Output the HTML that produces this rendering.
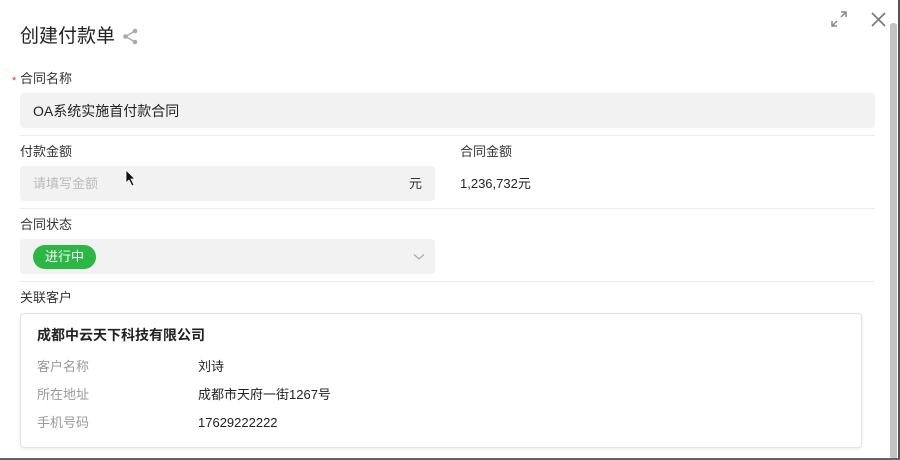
<!DOCTYPE html>
<html><head><meta charset="utf-8"><style>
*{margin:0;padding:0;box-sizing:border-box}
body{width:900px;height:460px;background:#fff;position:relative;overflow:hidden;font-family:"Liberation Sans","Noto Sans CJK SC",sans-serif;color:#222;font-size:13px;line-height:16px}
.a{position:absolute;line-height:16px}
.lbl{font-size:13px;color:#333}
.box{background:#f2f2f2;border-radius:4px}
.hr{height:1px;background:#ececec}
</style></head><body>
<div class="a" style="left:20px;top:24px;font-size:19px;line-height:26px;color:#222">创建付款单</div>
<svg class="a" style="left:122px;top:28px" width="17" height="17" viewBox="0 0 17 17"><g fill="#aaa"><circle cx="13" cy="3" r="2.3"/><circle cx="3.5" cy="8.5" r="2.3"/><circle cx="13" cy="14" r="2.3"/></g><path d="M13 3L3.5 8.5L13 14" stroke="#aaa" stroke-width="1.4" fill="none"/></svg>
<svg class="a" style="left:830px;top:10px" width="18" height="18" viewBox="0 0 18 18"><path d="M11 2h5v5M16 2l-5 5M2 11v5h5M2 16l5-5" stroke="#888" stroke-width="1.5" fill="none"/></svg>
<svg class="a" style="left:871px;top:12px" width="15" height="15" viewBox="0 0 15 15"><path d="M1 1L14 14M14 1L1 14" stroke="#777" stroke-width="1.6"/></svg>
<div class="a" style="left:890px;top:23px;width:7px;height:437px;background:#c4c4c4;border-radius:3px"></div>
<div class="a" style="left:898px;top:0;width:2px;height:460px;background:#555"></div>
<div class="a" style="left:0;top:458px;width:900px;height:2px;background:#666"></div>

<div class="a" style="left:12px;top:73px;color:#e33;font-size:11px">*</div>
<div class="a lbl" style="left:20px;top:71px">合同名称</div>
<div class="a box" style="left:20px;top:93px;width:855px;height:35px"></div>
<div class="a" style="left:33px;top:103px;font-size:14px">OA系统实施首付款合同</div>
<div class="a hr" style="left:20px;top:135px;width:855px"></div>

<div class="a lbl" style="left:20px;top:144px">付款金额</div>
<div class="a box" style="left:20px;top:166px;width:415px;height:35px"></div>
<div class="a" style="left:33px;top:176px;color:#bbb">请填写金额</div>
<div class="a" style="left:409px;top:176px;color:#333">元</div>
<svg class="a" style="left:125px;top:169px" width="12" height="18" viewBox="0 0 12 18"><path d="M1 1V14L4 11L7 17L9 16L6 10H10Z" fill="#111" stroke="#fff" stroke-width=".8"/></svg>
<div class="a lbl" style="left:460px;top:144px">合同金额</div>
<div class="a" style="left:460px;top:176px">1,236,732元</div>
<div class="a hr" style="left:20px;top:208px;width:855px"></div>

<div class="a lbl" style="left:20px;top:217px">合同状态</div>
<div class="a box" style="left:20px;top:239px;width:415px;height:35px"></div>
<div class="a" style="left:33px;top:245px;width:63px;height:24px;background:#2bb645;border-radius:12px;color:#fff;line-height:24px;text-align:center">进行中</div>
<svg class="a" style="left:413px;top:253px" width="12" height="8" viewBox="0 0 12 8"><path d="M1 1.5L6 6L11 1.5" stroke="#aaa" stroke-width="1.2" fill="none"/></svg>
<div class="a hr" style="left:20px;top:281px;width:855px"></div>

<div class="a lbl" style="left:20px;top:290px">关联客户</div>
<div class="a" style="left:20px;top:313px;width:842px;height:135px;border:1px solid #e4e4e4;border-radius:4px;box-shadow:0 1px 3px rgba(0,0,0,.08)"></div>
<div class="a" style="left:37px;top:327px;font-size:14px;font-weight:bold;color:#222">成都中云天下科技有限公司</div>
<div class="a" style="left:37px;top:359px;color:#999">客户名称</div>
<div class="a" style="left:198px;top:359px">刘诗</div>
<div class="a" style="left:37px;top:387px;color:#999">所在地址</div>
<div class="a" style="left:198px;top:387px">成都市天府一街1267号</div>
<div class="a" style="left:37px;top:415px;color:#999">手机号码</div>
<div class="a" style="left:198px;top:415px">17629222222</div>
</body></html>
